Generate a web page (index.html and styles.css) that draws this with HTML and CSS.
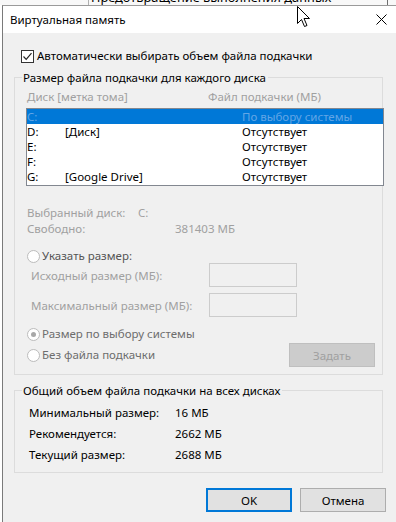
FILE: index.html
```html
<!DOCTYPE html>
<html lang="ru">
<head>
<meta charset="utf-8">
<title>Виртуальная память</title>
<link rel="stylesheet" href="styles.css">
</head>
<body>
<div class="screen">
  <div class="behind"><span class="tab">Предотвращение выполнения данных</span></div>
  <div class="dialog">
    <div class="titlebar">
      <span class="title">Виртуальная память</span>
      <svg class="close" width="11" height="11" viewBox="0 0 11 11"><path d="M0.5 0.5 L10.5 10.5 M10.5 0.5 L0.5 10.5" stroke="#000" stroke-width="1"/></svg>
    </div>
    <div class="content">
      <div class="check-row">
        <span class="checkbox"><svg width="11" height="11" viewBox="0 0 11 11"><path d="M1.5 5.5 L4.2 8.3 L9.5 2.2" fill="none" stroke="#222" stroke-width="1.2"/></svg></span>
        <span>Автоматически выбирать объем файла подкачки</span>
      </div>

      <div class="group g1">
        <div class="legend">Размер файла подкачки для каждого диска</div>
        <div class="head gray">
          <span class="h-drive">Диск [метка тома]</span>
          <span>Файл подкачки (МБ)</span>
        </div>
        <div class="listbox">
          <div class="row sel"><span class="d">C:</span><span class="l"></span><span class="f">По выбору системы</span></div>
          <div class="row"><span class="d">D:</span><span class="l">[Диск]</span><span class="f">Отсутствует</span></div>
          <div class="row"><span class="d">E:</span><span class="l"></span><span class="f">Отсутствует</span></div>
          <div class="row"><span class="d">F:</span><span class="l"></span><span class="f">Отсутствует</span></div>
          <div class="row"><span class="d">G:</span><span class="l">[Google Drive]</span><span class="f">Отсутствует</span></div>
        </div>
        <div class="info gray first"><span class="i-lab1">Выбранный диск:</span><span>C:</span></div>
        <div class="info gray"><span class="i-lab2">Свободно:</span><span>381403 МБ</span></div>

        <div class="radio-row r1"><span class="radio"></span><span class="r-text dark">Указать размер:</span></div>
        <div class="size-row"><span class="s-lab gray">Исходный размер (МБ):</span><span class="input"></span></div>
        <div class="size-row second"><span class="s-lab gray">Максимальный размер (МБ):</span><span class="input"></span></div>
        <div class="radio-row r2"><span class="radio on"></span><span class="r-text">Размер по выбору системы</span></div>
        <div class="last-row">
          <div class="radio-line"><span class="radio"></span><span class="r-text">Без файла подкачки</span></div>
          <span class="btn set">Задать</span>
        </div>
      </div>

      <div class="group g2">
        <div class="legend">Общий объем файла подкачки на всех дисках</div>
        <div class="total first"><span class="t-lab">Минимальный размер:</span><span>16 МБ</span></div>
        <div class="total"><span class="t-lab">Рекомендуется:</span><span>2662 МБ</span></div>
        <div class="total"><span class="t-lab">Текущий размер:</span><span>2688 МБ</span></div>
      </div>

      <div class="buttons">
        <span class="btn ok">OK</span>
        <span class="btn cancel">Отмена</span>
      </div>
    </div>
  </div>
  <svg class="cursor" width="14" height="22" viewBox="0 0 14 22"><path d="M0.5 0.5 L0.5 17.5 L4.5 13.5 L7.5 20.5 L10 19.5 L7 12.5 L12.5 12.5 Z" fill="#fff" stroke="#000" stroke-width="1" stroke-linejoin="miter"/></svg>
</div>
</body>
</html>
```

FILE: styles.css
```css
html, body {
  margin: 0;
  padding: 0;
}
body {
  background: #ffffff;
  font-family: "Noto Sans", "Liberation Sans", sans-serif;
  font-size: 11.5px;
  color: #000;
}
.screen {
  position: relative;
  width: 396px;
  height: 522px;
  overflow: hidden;
}
.behind {
  height: 5px;
  overflow: hidden;
  background: #f8f8f8;
}
.tab {
  display: block;
  margin-left: 88px;
  width: 296px;
  height: 20px;
  margin-top: -11px;
  padding-left: 2px;
  font-size: 12.8px;
  line-height: 16px;
  border-left: 1px solid #b0b0b0;
  border-right: 1px solid #6e6e6e;
  color: #000;
}
.dialog {
  margin-left: 2px;
  height: 517px;
  border-left: 1px solid #7a7a7a;
  border-top: 1px solid #9a9a9a;
  box-sizing: border-box;
  background: #f0f0f0;
}
.titlebar {
  height: 27px;
  background: #ffffff;
  display: flex;
  align-items: center;
  justify-content: space-between;
  padding-left: 7px;
  padding-right: 9px;
}
.title {
  line-height: 27px;
}
.close {
  display: block;
}
.content {
  padding-left: 11px;
}
.check-row {
  margin-top: 16px;
  margin-left: 7px;
  height: 14px;
  display: flex;
  align-items: center;
  line-height: 14px;
  gap: 3px;
}
.checkbox {
  width: 11px;
  height: 11px;
  border: 1px solid #333;
  background: #fff;
  display: flex;
  align-items: center;
  justify-content: center;
}
.checkbox svg {
  display: block;
}
.group {
  width: 369px;
  box-sizing: border-box;
  border: 1px solid #dcdcdc;
}
.g1 {
  margin-top: 14px;
  padding-bottom: 7px;
}
.g2 {
  margin-top: 15px;
  padding-bottom: 7px;
}
.legend {
  margin-top: -8px;
  margin-left: 7px;
  line-height: 16px;
  height: 16px;
  padding: 0 2px 0 1px;
  background: #f0f0f0;
  width: max-content;
}
.gray {
  color: #a0a0a0;
}
.head {
  margin-top: 3px;
  margin-left: 12px;
  line-height: 16px;
  display: flex;
}
.h-drive {
  width: 181px;
}
.listbox {
  margin-top: 3px;
  margin-left: 11px;
  width: 358px;
  box-sizing: border-box;
  border: 1px solid #828790;
  background: #ffffff;
  padding-bottom: 1px;
}
.row {
  height: 15px;
  box-sizing: border-box;
  padding-top: 1px;
  line-height: 14px;
  display: flex;
}
.row.sel {
  background: #0078d7;
  color: #62a6e6;
}
.d {
  width: 38px;
}
.l {
  width: 177px;
}
.info {
  margin-left: 12px;
  line-height: 16px;
  display: flex;
}
.info.first {
  margin-top: 19px;
}
.i-lab1 {
  width: 111px;
}
.i-lab2 {
  width: 148px;
}
.radio-row, .radio-line {
  display: flex;
  align-items: center;
  line-height: 14px;
  height: 14px;
  gap: 2px;
}
.radio-row {
  margin-left: 12px;
}
.r1 {
  margin-top: 12px;
}
.r2 {
  margin-top: 10px;
}
.radio {
  width: 11px;
  height: 11px;
  border: 1px solid #bcbcbc;
  border-radius: 50%;
  background: #ffffff;
  display: flex;
  align-items: center;
  justify-content: center;
  flex: none;
}
.radio.on::after {
  content: "";
  width: 5px;
  height: 5px;
  border-radius: 50%;
  background: #a8a8a8;
}
.r-text {
  color: #6d6d6d;
}
.r-text.dark {
  color: #555555;
}
.size-row {
  display: flex;
  align-items: center;
  height: 24px;
  margin-left: 16px;
}
.size-row.second {
  margin-top: 6px;
}
.s-lab {
  width: 178px;
}
.input {
  width: 88px;
  height: 24px;
  box-sizing: border-box;
  border: 1px solid #cccccc;
  background: #f0f0f0;
}
.last-row {
  margin-top: 2px;
  margin-left: 12px;
  margin-right: 7px;
  height: 24px;
  display: flex;
  align-items: center;
  justify-content: space-between;
}
.btn {
  display: flex;
  align-items: center;
  justify-content: center;
  height: 24px;
  box-sizing: border-box;
  width: 86px;
}
.set {
  background: #cccccc;
  border: 1px solid #bfbfbf;
  color: #a0a0a0;
}
.total {
  display: flex;
  margin-left: 14px;
  line-height: 21px;
}
.total.first {
  margin-top: 3px;
}
.t-lab {
  width: 146px;
}
.buttons {
  margin-top: 15px;
  margin-left: 192px;
  display: flex;
  gap: 8px;
}
.ok {
  background: #e1e1e1;
  border: 2px solid #0078d7;
}
.cancel {
  background: #e1e1e1;
  border: 1px solid #adadad;
}
.cursor {
  position: absolute;
  left: 297px;
  top: 6px;
}
```
